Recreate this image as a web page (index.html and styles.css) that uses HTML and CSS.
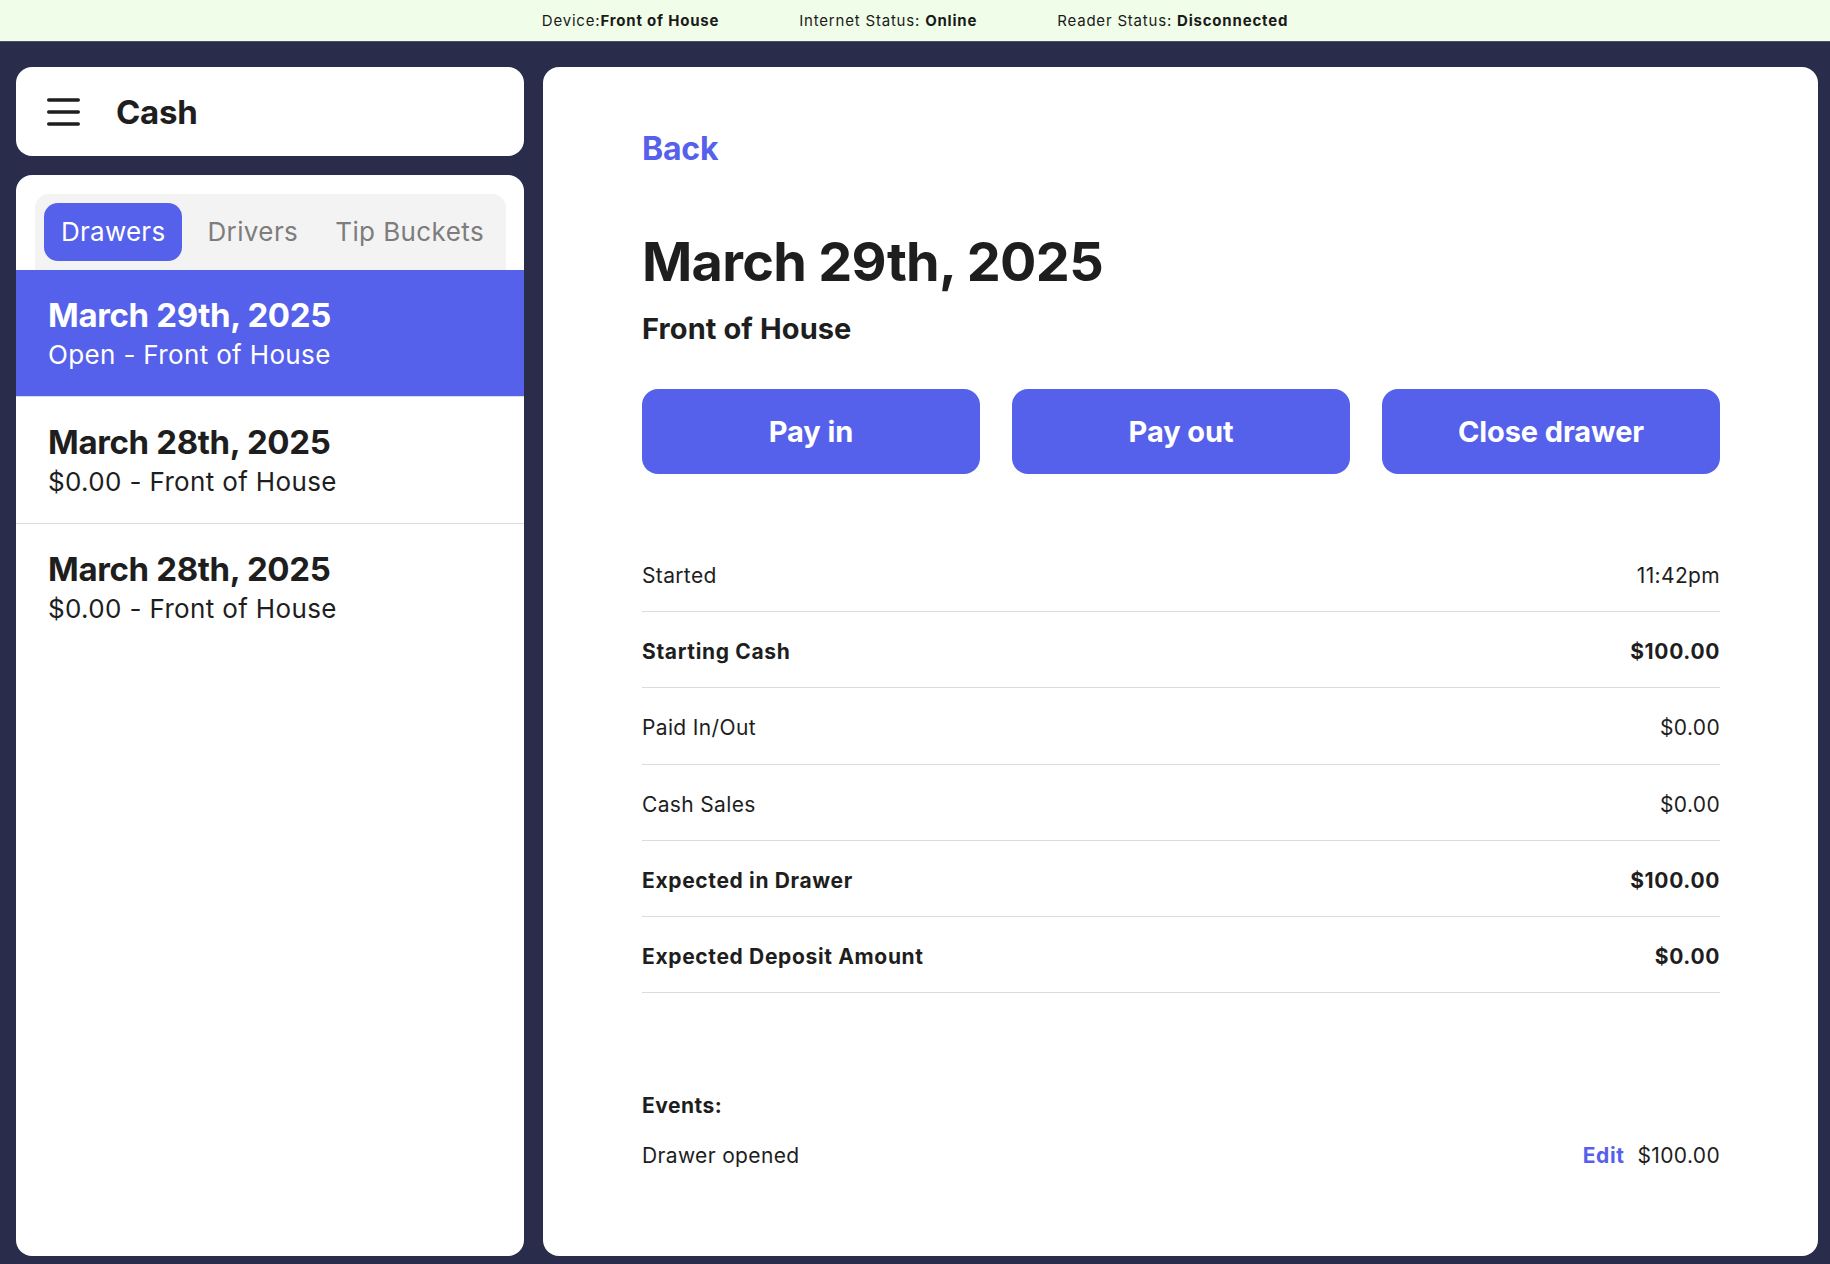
FILE: index.html
```html
<!DOCTYPE html>
<html lang="en">
<head>
<meta charset="utf-8">
<title>Cash</title>
<link rel="stylesheet" href="styles.css">
</head>
<body>
<div class="status-bar">
  <span class="status-item">Device:<b>Front of House</b></span>
  <span class="status-item">Internet Status: <b>Online</b></span>
  <span class="status-item">Reader Status: <b>Disconnected</b></span>
</div>
<div class="main">
  <aside class="sidebar">
    <div class="header-card">
      <svg class="menu-icon" width="33" height="28" viewBox="0 0 33 28" aria-hidden="true">
        <line x1="1.7" y1="2" x2="31.3" y2="2" />
        <line x1="1.7" y1="14" x2="31.3" y2="14" />
        <line x1="1.7" y1="26" x2="31.3" y2="26" />
      </svg>
      <h1 class="page-title">Cash</h1>
    </div>
    <div class="list-card">
      <div class="segment">
        <span class="tab active">Drawers</span>
        <span class="tab">Drivers</span>
        <span class="tab">Tip Buckets</span>
      </div>
      <div class="drawer-list">
        <div class="drawer-row selected">
          <div class="drawer-date">March 29th, 2025</div>
          <div class="drawer-sub">Open - Front of House</div>
        </div>
        <div class="drawer-row">
          <div class="drawer-date">March 28th, 2025</div>
          <div class="drawer-sub">$0.00 - Front of House</div>
        </div>
        <div class="drawer-row">
          <div class="drawer-date">March 28th, 2025</div>
          <div class="drawer-sub">$0.00 - Front of House</div>
        </div>
      </div>
    </div>
  </aside>
  <section class="detail-card">
    <a class="back-link">Back</a>
    <h2 class="detail-title">March 29th, 2025</h2>
    <div class="detail-sub">Front of House</div>
    <div class="actions">
      <button class="action-btn">Pay in</button>
      <button class="action-btn">Pay out</button>
      <button class="action-btn">Close drawer</button>
    </div>
    <div class="summary">
      <div class="summary-row"><span>Started</span><span>11:42pm</span></div>
      <div class="summary-row strong"><span>Starting Cash</span><span>$100.00</span></div>
      <div class="summary-row"><span>Paid In/Out</span><span>$0.00</span></div>
      <div class="summary-row"><span>Cash Sales</span><span>$0.00</span></div>
      <div class="summary-row strong"><span>Expected in Drawer</span><span>$100.00</span></div>
      <div class="summary-row strong"><span>Expected Deposit Amount</span><span>$0.00</span></div>
    </div>
    <div class="events">
      <div class="events-title">Events:</div>
      <div class="event-row">
        <span>Drawer opened</span>
        <span class="event-right"><a class="edit-link">Edit</a><span>$100.00</span></span>
      </div>
    </div>
  </section>
</div>
</body>
</html>
```

FILE: styles.css
```css
* { box-sizing: border-box; }

html, body {
  margin: 0;
  padding: 0;
}

body {
  width: 1830px;
  height: 1264px;
  overflow: hidden;
  background: #2a2c4b;
  font-family: "Inter", "Noto Sans", sans-serif;
  color: #1e1e1e;
}

.status-bar {
  height: 42px;
  background: #f0fde9;
  display: flex;
  justify-content: center;
  align-items: center;
  gap: 80px;
  font-size: 15px;
  letter-spacing: 0.8px;
  color: #1a1a1a;
  border-bottom: 1px solid #4d4f66;
}

.status-item b {
  font-weight: 700;
}

.main {
  height: 1222px;
  display: flex;
  gap: 19px;
  padding: 25px 12px 8px 16px;
}

.sidebar {
  width: 508px;
  flex: none;
  display: flex;
  flex-direction: column;
  gap: 19px;
}

.header-card {
  height: 89px;
  background: #fff;
  border-radius: 16px;
  display: flex;
  align-items: center;
  padding-left: 31px;
  gap: 36px;
}

.menu-icon line {
  stroke: #1e1e1e;
  stroke-width: 3.4;
  stroke-linecap: round;
}

.page-title {
  margin: 0;
  font-size: 33px;
  font-weight: 700;
  line-height: 40px;
  letter-spacing: -0.3px;
}

.list-card {
  flex: 1;
  background: #fff;
  border-radius: 16px;
  padding-top: 19px;
  overflow: hidden;
}

.segment {
  margin: 0 18px 0 19px;
  background: #f3f3f3;
  border-radius: 14px 14px 0 0;
  padding: 9px;
  display: flex;
  gap: 4px;
}

.tab {
  flex: none;
  white-space: nowrap;
  height: 58px;
  line-height: 58px;
  padding: 0 12px 0 21px;
  border-radius: 14px;
  font-size: 26px;
  letter-spacing: 0.4px;
  color: #7d7d7d;
}

.tab.active {
  background: #5661eb;
  color: #fff;
  padding: 0 17px;
  letter-spacing: 0.25px;
}

.drawer-row {
  padding: 25px 32px;
  border-bottom: 1px solid #dcdcdc;
}

.drawer-row:last-child {
  border-bottom: none;
}

.drawer-row.selected {
  background: #5661eb;
  color: #fff;
}

.drawer-date {
  font-size: 33px;
  font-weight: 700;
  line-height: 40px;
  letter-spacing: -0.35px;
}

.drawer-sub {
  font-size: 26px;
  line-height: 32px;
  margin-top: 4px;
  letter-spacing: 0.35px;
}

.detail-card {
  flex: 1;
  background: #fff;
  border-radius: 16px;
  padding: 63px 98px 0 99px;
}

.back-link {
  display: block;
  color: #5661eb;
  font-size: 32px;
  font-weight: 700;
  line-height: 38px;
  letter-spacing: -0.2px;
}

.detail-title {
  margin: 62px 0 0;
  font-size: 54px;
  font-weight: 700;
  line-height: 64px;
  letter-spacing: -0.7px;
}

.detail-sub {
  margin-top: 17px;
  font-size: 29px;
  font-weight: 700;
  line-height: 35px;
  letter-spacing: 0.1px;
}

.actions {
  margin-top: 43px;
  display: grid;
  grid-template-columns: repeat(3, 1fr);
  gap: 32px;
}

.action-btn {
  height: 85px;
  border: none;
  border-radius: 16px;
  background: #5661eb;
  color: #fff;
  font-family: inherit;
  font-size: 29px;
  font-weight: 700;
  letter-spacing: -0.1px;
}

.summary {
  margin-top: 62px;
}

.summary-row {
  display: flex;
  justify-content: space-between;
  padding: 27px 0 23.2px;
  border-bottom: 1px solid #dcdcdc;
  font-size: 21px;
  line-height: 25px;
  letter-spacing: 0.35px;
}

.summary-row.strong {
  font-weight: 700;
  letter-spacing: 0.65px;
}

.events {
  margin-top: 100px;
  font-size: 21px;
  line-height: 25px;
  letter-spacing: 0.35px;
}

.events-title {
  font-weight: 700;
  letter-spacing: 0.5px;
}

.event-row {
  margin-top: 25px;
  display: flex;
  justify-content: space-between;
}

.event-right {
  display: flex;
  gap: 13px;
}

.edit-link {
  color: #5661eb;
  font-weight: 700;
  letter-spacing: 0.6px;
}
```
